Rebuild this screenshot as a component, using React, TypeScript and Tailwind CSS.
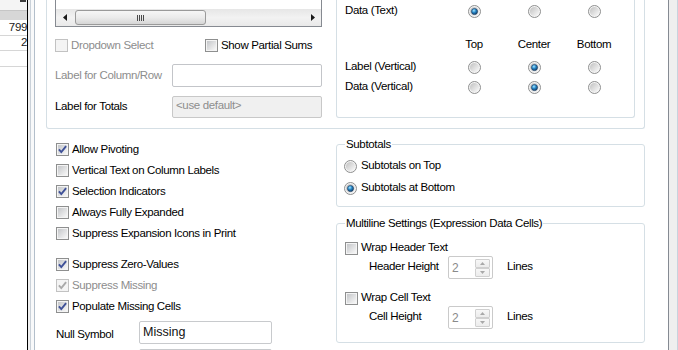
import React from "react";

const F = "font-['Liberation_Sans',Arial,sans-serif]";

function Check({ checked = false, disabled = false }: { checked?: boolean; disabled?: boolean }) {
  return (
    <svg width="13" height="13" viewBox="0 0 13 13" className="shrink-0 block">
      <defs>
        <linearGradient id="cbg" x1="0" y1="0" x2="1" y2="1">
          <stop offset="0" stopColor="#c4c6c9" />
          <stop offset="1" stopColor="#f8f8f8" />
        </linearGradient>
      </defs>
      <rect x="0.5" y="0.5" width="12" height="12" fill="#f4f4f4" stroke={disabled ? "#c2c2c2" : "#8e8f8f"} />
      <rect x="2" y="2" width="9" height="9" fill={disabled ? "#f4f4f4" : "url(#cbg)"} />
      {checked && (
        <path
          d="M2.9 6.4 L5.3 9.1 L10.1 3.1"
          fill="none"
          stroke={disabled ? "#a9a9a9" : "#3f5198"}
          strokeWidth="1.9"
        />
      )}
    </svg>
  );
}

function Radio({ on = false }: { on?: boolean }) {
  return (
    <svg width="13" height="13" viewBox="0 0 13 13" className="shrink-0 block">
      <defs>
        <linearGradient id="rbg" x1="0" y1="0" x2="1" y2="1">
          <stop offset="0" stopColor="#c0c0c0" />
          <stop offset="1" stopColor="#fbfbfb" />
        </linearGradient>
        <radialGradient id="rdot" cx="0.4" cy="0.35" r="0.7">
          <stop offset="0" stopColor="#a6e8ff" />
          <stop offset="0.45" stopColor="#2a88c8" />
          <stop offset="1" stopColor="#0b3760" />
        </radialGradient>
      </defs>
      <circle cx="6.5" cy="6.5" r="6" fill="#f4f4f4" stroke="#8e8f8f" />
      <circle cx="6.5" cy="6.5" r="4.6" fill="url(#rbg)" />
      {on && <circle cx="6.5" cy="6.5" r="3.1" fill="url(#rdot)" stroke="#1c3b5e" strokeWidth="0.6" />}
    </svg>
  );
}

function Scrollbar() {
  return (
    <div className="h-[17px] flex items-center bg-gradient-to-b from-[#e6e6e6] via-[#f2f2f2] to-[#e9e9e9]">
      <div className="w-[17px] h-[17px] flex items-center justify-center">
        <svg width="4" height="7" viewBox="0 0 4 7">
          <path d="M4 0 L0 3.5 L4 7 Z" fill="#1a1a1a" />
        </svg>
      </div>
      <div className="ml-[2px] w-[131px] h-[15px] rounded-[3px] border border-[#9a9a9a] bg-gradient-to-b from-[#f6f6f6] via-[#ebebeb] to-[#d6d6d6] flex items-center justify-center">
        <div className="flex gap-[1px]">
          <div className="w-[1px] h-[6px] bg-[#4a4a4a]" />
          <div className="w-[1px] h-[6px] bg-[#4a4a4a]" />
          <div className="w-[1px] h-[6px] bg-[#4a4a4a]" />
          <div className="w-[1px] h-[6px] bg-[#4a4a4a]" />
        </div>
      </div>
      <div className="flex-1" />
      <div className="w-[17px] h-[17px] flex items-center justify-center">
        <svg width="4" height="7" viewBox="0 0 4 7">
          <path d="M0 0 L4 3.5 L0 7 Z" fill="#1a1a1a" />
        </svg>
      </div>
    </div>
  );
}

function RRow({ label, sel, h = "h-[20px]" }: { label: string; sel: number; h?: string }) {
  return (
    <div className={`${h} flex items-center`}>
      <span className="w-[99px]">{label}</span>
      {[0, 1, 2].map((i) => (
        <div key={i} className="w-[60px] flex justify-center">
          <Radio on={i === sel} />
        </div>
      ))}
    </div>
  );
}

function CRow({ label, checked, disabled, mt = "" }: { label: string; checked?: boolean; disabled?: boolean; mt?: string }) {
  return (
    <div className={`h-[21px] flex items-center gap-[3px] ${mt} ${disabled ? "text-[#8d8d8d]" : ""}`}>
      <Check checked={checked} disabled={disabled} />
      <span>{label}</span>
    </div>
  );
}

function Spin({ label }: { label: string }) {
  return (
    <div className="h-[23px] flex items-center pl-[24px]">
      <span className="w-[79px] -mt-[1px]">{label}</span>
      <div className="w-[45px] h-[23px] border border-[#cacaca] rounded-[2px] bg-white flex items-center">
        <span className="flex-1 pl-[3px] text-[12px] text-[#8a8a8a]">2</span>
        <div className="flex flex-col mr-[2px]">
          <div className="w-[15px] h-[9px] border border-[#d0d0d0] rounded-[1px] bg-gradient-to-b from-[#f7f7f7] to-[#ececec] flex items-center justify-center">
            <svg width="5" height="3" viewBox="0 0 5 3">
              <path d="M0 3 L2.5 0 L5 3 Z" fill="#a8a8a8" />
            </svg>
          </div>
          <div className="w-[15px] h-[9px] border border-[#d0d0d0] rounded-[1px] bg-gradient-to-b from-[#f7f7f7] to-[#ececec] flex items-center justify-center">
            <svg width="5" height="3" viewBox="0 0 5 3">
              <path d="M0 0 L2.5 3 L5 0 Z" fill="#a8a8a8" />
            </svg>
          </div>
        </div>
      </div>
      <span className="ml-[14px] -mt-[1px]">Lines</span>
    </div>
  );
}

export default function App() {
  return (
    <div className={`${F} text-[11.5px] tracking-[-0.35px] leading-none text-black w-[678px] h-[350px] overflow-hidden flex bg-white`}>
      {/* left table strip */}
      <div className="w-[27px] shrink-0 flex flex-col bg-white overflow-hidden">
        <div className="h-[10px] bg-[#f4f4f4] flex justify-end">
          <div className="w-[6px] h-[2px] bg-[#3c3c3c] mr-[1px]" />
        </div>
        <div className="h-[10px] bg-[#d7d7d7] border-t border-[#c6c6c6]" />
        <div className="h-[16px] border-b border-[#d6d6d6] flex items-center justify-end text-[#222]">799</div>
        <div className="h-[15px] border-b border-[#d6d6d6] flex items-center justify-end text-[#222]">2</div>
        <div className="h-[16px] border-b border-[#d6d6d6]" />
      </div>
      <div className="w-px shrink-0 bg-black" />
      <div className="w-[2px] shrink-0 bg-[#f0f0f0]" />
      <div className="w-px shrink-0 bg-[#c9d1d9]" />
      <div className="w-[3px] shrink-0 bg-[#f8f9fa]" />
      <div className="w-px shrink-0 bg-[#b3bfcb]" />

      {/* main */}
      <div className="w-[633px] shrink-0 flex flex-col pl-[11px] bg-white">
        {/* top panel */}
        <div className="w-[599px] h-[129px] shrink-0 border-x border-b border-[#d5dfe5] rounded-b-[3px] flex pl-[8px]">
          <div className="w-[267px] shrink-0 flex flex-col">
            <div className="h-[27px] border-x border-b border-[#868a91] flex flex-col justify-end">
              <Scrollbar />
            </div>
            <div className="mt-[8px] h-[21px] flex items-center">
              <div className="w-[150px] flex items-center gap-[3px] text-[#8d8d8d]">
                <Check disabled />
                <span>Dropdown Select</span>
              </div>
              <div className="flex items-center gap-[3px]">
                <Check />
                <span>Show Partial Sums</span>
              </div>
            </div>
            <div className="mt-[8px] h-[23px] flex items-center">
              <span className="w-[117px] text-[#8d8d8d]">Label for Column/Row</span>
              <div className="w-[150px] h-[23px] border border-[#c3c5c9] rounded-[2px] bg-white" />
            </div>
            <div className="mt-[9px] h-[22px] flex items-center">
              <span className="w-[117px]">Label for Totals</span>
              <div className="w-[150px] h-[22px] border border-[#c8c8c8] rounded-[2px] bg-[#f0f0f0] text-[#8d8d8d] pl-[3px] pt-[3px]">
                &lt;use default&gt;
              </div>
            </div>
          </div>
          <div className="ml-[14px] w-[299px] h-[118px] shrink-0 border-x border-b border-[#d5dfe5] rounded-b-[3px] pl-[8px] flex flex-col">
            <RRow label="Data (Text)" sel={0} h="h-[22px]" />
            <div className="mt-[13px] h-[20px] flex items-center">
              <span className="w-[99px]" />
              <span className="w-[60px] text-center">Top</span>
              <span className="w-[60px] text-center">Center</span>
              <span className="w-[60px] text-center">Bottom</span>
            </div>
            <div className="mt-[2px]">
              <RRow label="Label (Vertical)" sel={1} />
            </div>
            <RRow label="Data (Vertical)" sel={1} />
          </div>
        </div>

        {/* bottom section */}
        <div className="flex">
          <div className="w-[290px] shrink-0 pl-[10px] pt-[10px] flex flex-col">
            <CRow label="Allow Pivoting" checked />
            <CRow label="Vertical Text on Column Labels" />
            <CRow label="Selection Indicators" checked />
            <CRow label="Always Fully Expanded" />
            <CRow label="Suppress Expansion Icons in Print" />
            <CRow label="Suppress Zero-Values" checked mt="mt-[10px]" />
            <CRow label="Suppress Missing" checked disabled />
            <CRow label="Populate Missing Cells" checked />
            <div className="mt-[4px] flex items-start">
              <span className="w-[83px] pt-[8px]">Null Symbol</span>
              <div className="w-[133px] h-[23px] border border-[#c8cacd] rounded-[2px] bg-white pl-[3px] pt-[4px] text-[12.5px] tracking-[0px] text-[#111]">
                Missing
              </div>
            </div>
            <div className="mt-[5px] flex">
              <span className="w-[83px]" />
              <div className="w-[133px] h-[23px] border border-[#c8cacd] rounded-[2px] bg-white" />
            </div>
          </div>
          <div className="w-[309px] shrink-0 pt-[8px] flex flex-col">
            <fieldset className="border border-[#d5dfe5] rounded-[3px] pl-[7px] pt-[5px] pb-[8px]">
              <legend className="ml-[1px] px-px leading-[14px]">Subtotals</legend>
              <div className="h-[20px] flex items-center gap-[4px]">
                <Radio />
                <span>Subtotals on Top</span>
              </div>
              <div className="mt-[2px] h-[20px] flex items-center gap-[4px]">
                <Radio on />
                <span>Subtotals at Bottom</span>
              </div>
            </fieldset>
            <fieldset className="mt-[9px] border border-[#d5dfe5] rounded-[3px] pl-[8px] pt-[10px] pb-[13px]">
              <legend className="px-px leading-[14px]">Multiline Settings (Expression Data Cells)</legend>
              <div className="h-[16px] flex items-center gap-[3px]">
                <Check />
                <span>Wrap Header Text</span>
              </div>
              <Spin label="Header Height" />
              <div className="mt-[11px] h-[16px] flex items-center gap-[3px]">
                <Check />
                <span>Wrap Cell Text</span>
              </div>
              <Spin label="Cell Height" />
            </fieldset>
          </div>
        </div>
      </div>

      {/* right strip */}
      <div className="w-px shrink-0 bg-[#858a92]" />
      <div className="w-[8px] shrink-0 bg-[#efefef]" />
      <div className="w-px shrink-0 bg-[#c8d3de]" />
    </div>
  );
}
